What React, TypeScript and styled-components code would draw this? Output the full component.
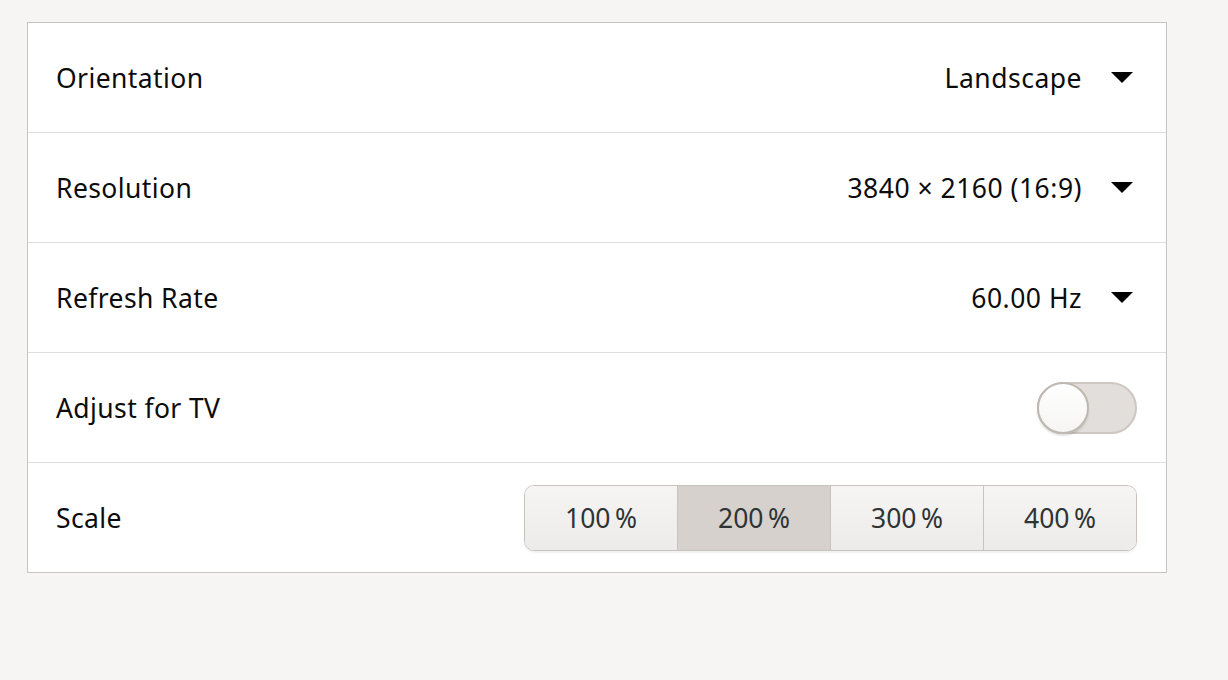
import styled, { createGlobalStyle } from 'styled-components'

const GlobalStyle = createGlobalStyle`
  body {
    margin: 0;
    background: #f6f5f4;
    font-family: 'Noto Sans', 'Open Sans', sans-serif;
  }
`

const Page = styled.div`
  padding: 22px 0 0 27px;
  height: 680px;
  box-sizing: border-box;
`

const Panel = styled.div`
  width: 1140px;
  box-sizing: border-box;
  background: #fff;
  border: 1px solid #c9c4bf;
`

const Row = styled.div`
  height: 110px;
  box-sizing: border-box;
  display: flex;
  align-items: center;
  justify-content: space-between;
  padding: 0 29px 0 28px;
  border-bottom: 1px solid #e0dedb;

  &:last-child {
    height: 109px;
    border-bottom: none;
  }
`

const Label = styled.div`
  font-size: 26.5px;
  color: #0c0c0c;
  letter-spacing: 0.4px;
`

const Combo = styled.div`
  display: flex;
  align-items: center;
  gap: 29px;
  font-size: 26.5px;
  color: #0c0c0c;
  letter-spacing: 0.5px;
  padding-right: 4px;
`

const Arrow = () => (
  <svg width="22" height="12" viewBox="0 0 22 12">
    <path d="M0 0 L22 0 L11 11 Z" fill="#000" />
  </svg>
)

const Switch = styled.div`
  width: 100px;
  height: 52px;
  box-sizing: border-box;
  border-radius: 26px;
  background: #e1dedb;
  border: 2px solid #cdc7c2;
  position: relative;
`

const Knob = styled.div`
  position: absolute;
  left: -2px;
  top: -2px;
  width: 52px;
  height: 52px;
  box-sizing: border-box;
  border-radius: 50%;
  border: 2px solid #bfb8b1;
  background: linear-gradient(#ffffff, #f6f5f4);
  box-shadow: 0 2px 2px rgba(0, 0, 0, 0.12);
`

const Segmented = styled.div`
  display: flex;
  border: 1px solid #c9c3bd;
  border-radius: 10px;
  overflow: hidden;
  box-shadow: 0 2px 2px rgba(0, 0, 0, 0.06);
`

const Segment = styled.div<{ $active?: boolean }>`
  width: 152px;
  height: 64px;
  display: flex;
  align-items: center;
  justify-content: center;
  font-size: 26.5px;
  letter-spacing: 0.4px;
  color: #2e3436;
  background: ${({ $active }) =>
    $active ? '#d6d1cd' : 'linear-gradient(#f6f5f4, #edebe9)'};
  border-left: 1px solid #c9c3bd;

  &:first-child {
    border-left: none;
  }
`

const scales = ['100\u202F%', '200\u202F%', '300\u202F%', '400\u202F%']

const App = () => {
  return (
    <Page>
      <GlobalStyle />
      <Panel>
        <Row>
          <Label>Orientation</Label>
          <Combo>
            Landscape
            <Arrow />
          </Combo>
        </Row>
        <Row>
          <Label>Resolution</Label>
          <Combo>
            3840 × 2160 (16:9)
            <Arrow />
          </Combo>
        </Row>
        <Row>
          <Label>Refresh Rate</Label>
          <Combo>
            60.00 Hz
            <Arrow />
          </Combo>
        </Row>
        <Row>
          <Label>Adjust for TV</Label>
          <Switch>
            <Knob />
          </Switch>
        </Row>
        <Row>
          <Label>Scale</Label>
          <Segmented>
            {scales.map((s, i) => (
              <Segment key={s} $active={i === 1}>
                {s}
              </Segment>
            ))}
          </Segmented>
        </Row>
      </Panel>
    </Page>
  )
}

export default App
